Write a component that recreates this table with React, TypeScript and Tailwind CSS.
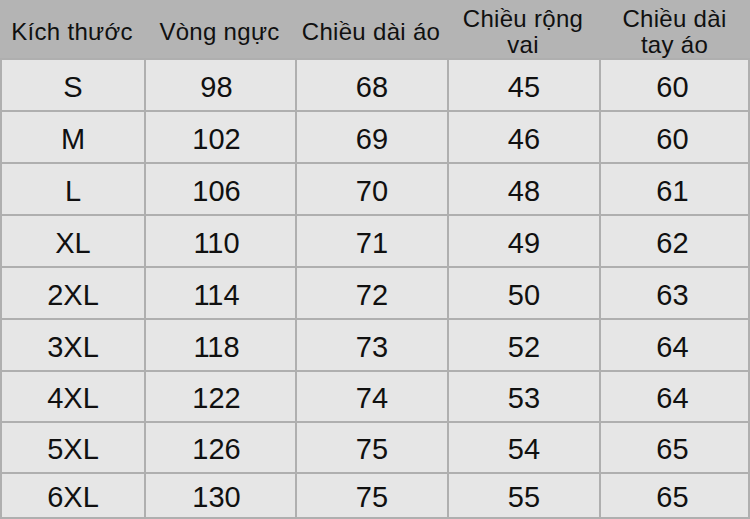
import React from "react";

const headers: string[][] = [
  ["Kích thước"],
  ["Vòng ngực"],
  ["Chiều dài áo"],
  ["Chiều rộng", "vai"],
  ["Chiều dài", "tay áo"],
];

const rows: string[][] = [
  ["S", "98", "68", "45", "60"],
  ["M", "102", "69", "46", "60"],
  ["L", "106", "70", "48", "61"],
  ["XL", "110", "71", "49", "62"],
  ["2XL", "114", "72", "50", "63"],
  ["3XL", "118", "73", "52", "64"],
  ["4XL", "122", "74", "53", "64"],
  ["5XL", "126", "75", "54", "65"],
  ["6XL", "130", "75", "55", "65"],
];

const rowH = ["h-[50px]", "h-[50px]", "h-[50px]", "h-[50px]", "h-[50px]", "h-[50px]", "h-[49px]", "h-[49px]", "h-[43px]"];
const colPad = ["", "pr-[8px]", "", "", "pr-[4px]"];

export default function App() {
  return (
    <div
      className="w-[750px] h-[519px] overflow-hidden bg-[#afafaf] text-[#101010]"
      style={{ fontFamily: '"Liberation Sans", Arial, sans-serif' }}
    >
      <div className="grid grid-cols-[144px_151px_152px_152px_151px] h-[58px] bg-[#b4b4b4]">
        {headers.map((h, i) => (
          <div
            key={i}
            className="flex flex-col items-center justify-center pt-[5px] text-[24px] leading-[26px] tracking-[0.3px] text-center"
          >
            {h.map((l, j) => (
              <span key={j}>{l}</span>
            ))}
          </div>
        ))}
      </div>
      <div className="grid grid-cols-[142px_149px_150px_150px_147px] gap-[2px] p-[2px]">
        {rows.map((r, ri) =>
          r.map((c, ci) => (
            <div
              key={`${ri}-${ci}`}
              className={`${rowH[ri]} ${colPad[ci]} flex items-center justify-center pt-[5px] bg-[#e6e6e6] text-[29px]`}
            >
              {c}
            </div>
          ))
        )}
      </div>
    </div>
  );
}
